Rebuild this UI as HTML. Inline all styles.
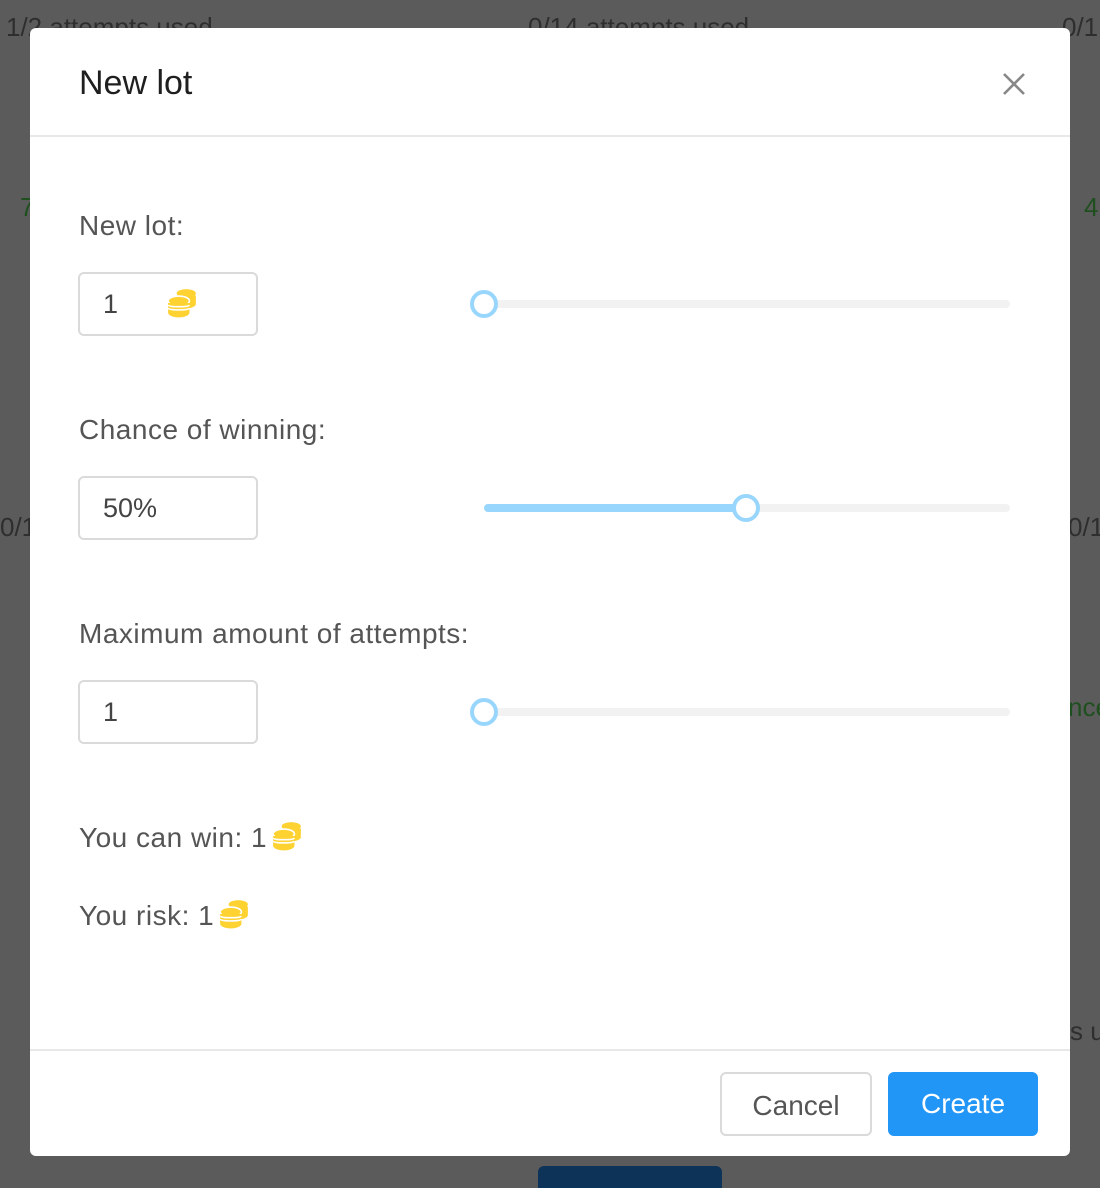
<!DOCTYPE html>
<html><head><meta charset="utf-8"><style>
*{margin:0;padding:0;box-sizing:border-box}
html,body{width:1100px;height:1188px;overflow:hidden}
body{background:#5b5b5b;font-family:"Liberation Sans",sans-serif;position:relative}
.bg{position:absolute;color:#2e2e2e;font-size:26px;white-space:nowrap}
.modal{position:absolute;left:30px;top:28px;width:1040px;height:1128px;background:#fff;border-radius:6px}
.hd{height:109px;border-bottom:2px solid #e8e8e8;position:relative}
.hd h1{position:absolute;left:49px;top:36px;font-size:34px;font-weight:normal;color:#1f1f1f}
.x{position:absolute;left:972px;top:44px;width:24px;height:24px}
.lbl{position:absolute;left:49px;font-size:28px;color:#555;white-space:nowrap;letter-spacing:0.5px}
.inp{position:absolute;left:48px;width:180px;height:64px;border:2px solid #dadada;border-radius:6px;font-size:27px;color:#444;padding:15px 0 0 23px}
.track{position:absolute;left:454px;width:526px;height:8px;background:#f2f2f2;border-radius:4px}
.fill{position:absolute;left:0;top:0;height:8px;background:#98d6fd;border-radius:4px}
.knob{position:absolute;width:28px;height:28px;border:4px solid #98d6fd;background:#fff;border-radius:50%;top:-10px}
.ft{position:absolute;left:0;top:1021px;width:1040px;border-top:2px solid #e8e8e8}
.btn{position:absolute;top:1044px;height:64px;border-radius:6px;font-size:28px;text-align:center;padding-top:16px}
.coin{display:inline-block;vertical-align:middle}
</style></head><body>
<div class="bg" style="left:6px;top:12px">1/2 attempts used</div>
<div class="bg" style="left:528px;top:12px">0/14 attempts used</div>
<div class="bg" style="left:1062px;top:12px">0/1</div>
<div class="bg" style="left:0;top:512px">0/1</div>
<div class="bg" style="left:1068px;top:512px">0/1</div>
<div class="bg" style="left:20px;top:192px;color:#1f4f1f">7</div>
<div class="bg" style="left:1084px;top:192px;color:#1f4f1f">4</div>
<div class="bg" style="left:1068px;top:692px;color:#1f4f1f">nce</div>
<div class="bg" style="left:1070px;top:1016px">s us</div>
<div style="position:absolute;left:538px;top:1166px;width:184px;height:22px;background:#0e3358;border-radius:6px 6px 0 0"></div>
<div class="modal">
<div class="hd"><h1>New lot</h1>
<svg class="x" viewBox="0 0 24 24"><path d="M2 2L22 22M22 2L2 22" stroke="#888" stroke-width="2.6"/></svg></div>
<div class="lbl" style="top:182px">New lot:</div>
<div class="inp" style="top:244px">1
<svg class="coin" style="position:absolute;left:86px;top:13px" width="32" height="32" viewBox="0 0 30 30"><g fill="#fdd231"><ellipse cx="19" cy="6" rx="9" ry="4"/><path d="M10 8h18v8c0 2-4 4-9 4s-9-2-9-4z"/><ellipse cx="12" cy="13" rx="10" ry="4.5" stroke="#fff" stroke-width="1.5"/><path d="M2 15h20v9c0 2.5-4.5 4.5-10 4.5S2 26.5 2 24z"/></g><path d="M2 20c2 2 18 2 20 0M2 17c2 2 18 2 20 0" stroke="#fff" stroke-width="1.5" fill="none"/></svg></div>
<div class="track" style="top:272px"><div class="knob" style="left:-14px"></div></div>
<div class="lbl" style="top:386px">Chance of winning:</div>
<div class="inp" style="top:448px">50%</div>
<div class="track" style="top:476px"><div class="fill" style="width:262px"></div><div class="knob" style="left:248px"></div></div>
<div class="lbl" style="top:590px">Maximum amount of attempts:</div>
<div class="inp" style="top:652px">1</div>
<div class="track" style="top:680px"><div class="knob" style="left:-14px"></div></div>
<div class="lbl" style="top:794px">You can win: 1 <svg class="coin" width="32" height="32" viewBox="0 0 30 30" style="margin-top:-8px;margin-left:-4px"><g fill="#fdd231"><ellipse cx="19" cy="6" rx="9" ry="4"/><path d="M10 8h18v8c0 2-4 4-9 4s-9-2-9-4z"/><ellipse cx="12" cy="13" rx="10" ry="4.5" stroke="#fff" stroke-width="1.5"/><path d="M2 15h20v9c0 2.5-4.5 4.5-10 4.5S2 26.5 2 24z"/></g><path d="M2 20c2 2 18 2 20 0M2 17c2 2 18 2 20 0" stroke="#fff" stroke-width="1.5" fill="none"/></svg></div>
<div class="lbl" style="top:872px">You risk: 1 <svg class="coin" width="32" height="32" viewBox="0 0 30 30" style="margin-top:-8px;margin-left:-4px"><g fill="#fdd231"><ellipse cx="19" cy="6" rx="9" ry="4"/><path d="M10 8h18v8c0 2-4 4-9 4s-9-2-9-4z"/><ellipse cx="12" cy="13" rx="10" ry="4.5" stroke="#fff" stroke-width="1.5"/><path d="M2 15h20v9c0 2.5-4.5 4.5-10 4.5S2 26.5 2 24z"/></g><path d="M2 20c2 2 18 2 20 0M2 17c2 2 18 2 20 0" stroke="#fff" stroke-width="1.5" fill="none"/></svg></div>
<div class="ft"></div>
<div class="btn" style="left:690px;width:152px;border:2px solid #dadada;color:#555">Cancel</div>
<div class="btn" style="left:858px;width:150px;background:#2196f7;color:#fff">Create</div>
</div>
</body></html>
